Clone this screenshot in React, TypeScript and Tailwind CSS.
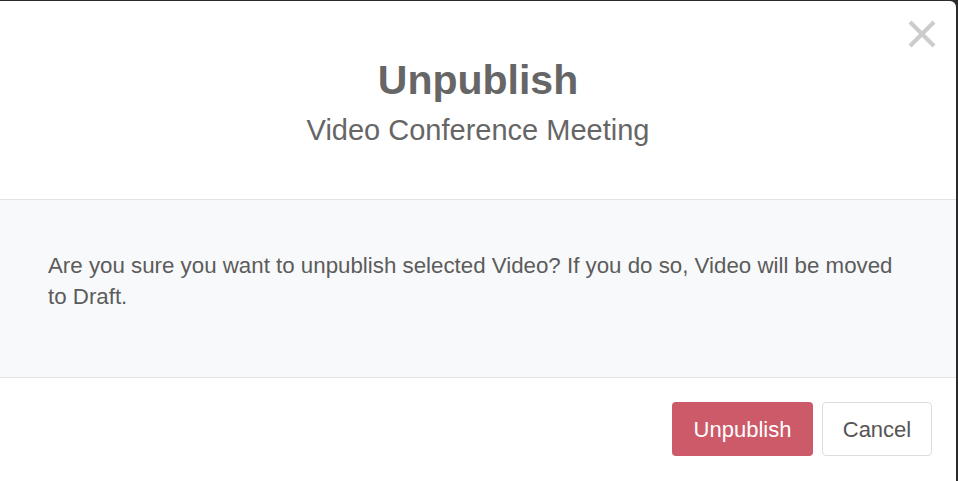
export default function App()
{
  return (
    <main className="h-[481px] w-[958px] overflow-hidden bg-[#2b2b2b] pt-[1px] pr-[2px]" style={{ fontFamily: '"Liberation Sans", Arial, sans-serif' }}>

      <div className="relative h-[480px] w-[956px] overflow-hidden rounded-tr-md bg-white">

        <button className="absolute right-[20px] top-[19px] h-[28px] w-[28px]" aria-label="Close">
          <svg viewBox="0 0 28 28" className="h-[28px] w-[28px]">
            <path d="M2 2 L26 26 M26 2 L2 26" stroke="#cccccc" strokeWidth="4.2" />
          </svg>
        </button>

        <div className="flex h-[199px] flex-col items-center border-b border-[#e3e3e3] pt-[57px]">

          <h1 className="text-[41px] font-bold leading-[45px] text-[#666666]">
            Unpublish
          </h1>

          <p className="mt-[10px] text-[29px] leading-[35px] text-[#666666]">
            Video Conference Meeting
          </p>

        </div>

        <div className="h-[178px] border-b border-[#e3e3e3] bg-[#f8f9fa] px-[48px] pt-[50px]">

          <p className="text-[22.3px] leading-[31px] text-[#5c5c5c]">
            Are you sure you want to unpublish selected Video? If you do so, Video will be moved to Draft.
          </p>

        </div>

        <div className="flex justify-end gap-[9px] px-[24px] pt-[24px]">

          <button className="h-[54px] w-[141px] rounded-[4px] bg-[#cd5a69] text-[22px] text-white">
            Unpublish
          </button>

          <button className="h-[54px] w-[110px] rounded-[4px] border border-[#dddddd] bg-white text-[22px] text-[#555555]">
            Cancel
          </button>

        </div>

      </div>

    </main>
  )
}
